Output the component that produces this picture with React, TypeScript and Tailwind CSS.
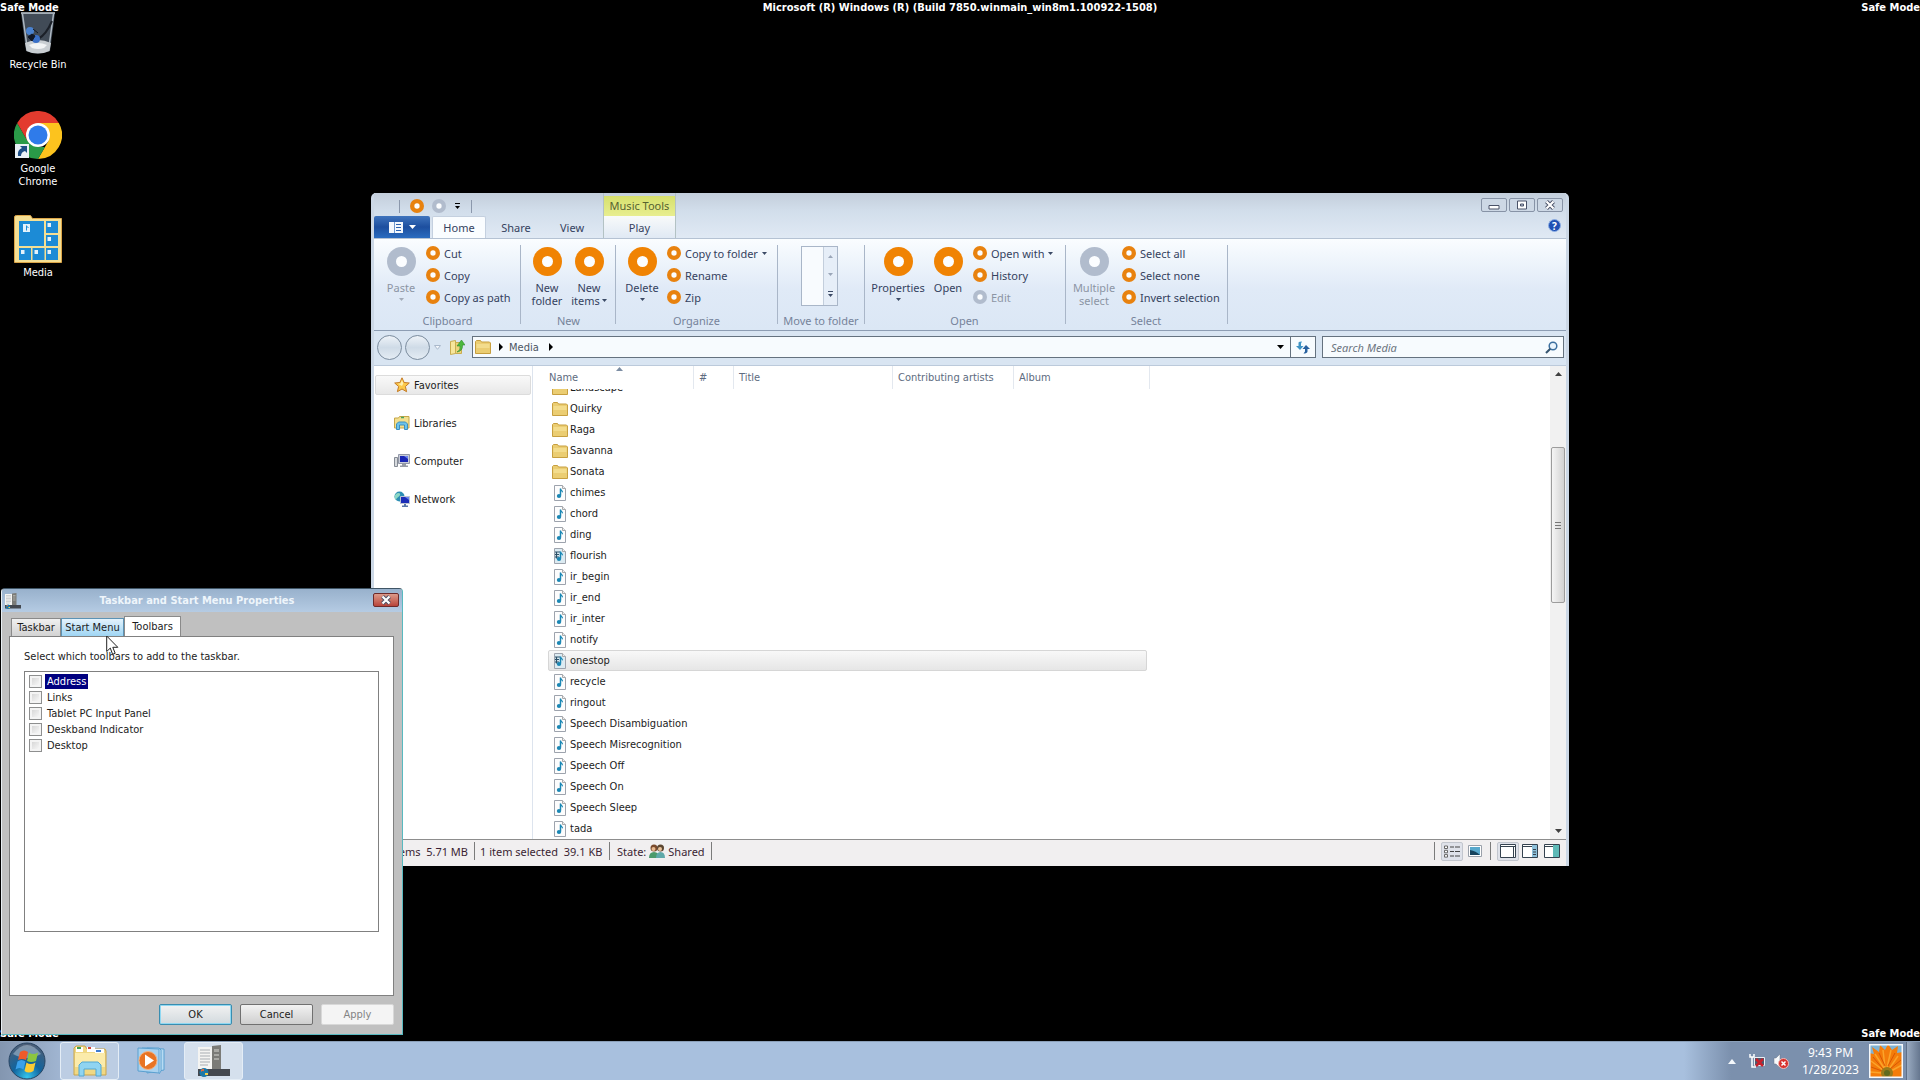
import type { ReactNode } from "react";

const files = [
  "Landscape",
  "Quirky",
  "Raga",
  "Savanna",
  "Sonata",
  "chimes",
  "chord",
  "ding",
  "flourish",
  "ir_begin",
  "ir_end",
  "ir_inter",
  "notify",
  "onestop",
  "recycle",
  "ringout",
  "Speech Disambiguation",
  "Speech Misrecognition",
  "Speech Off",
  "Speech On",
  "Speech Sleep",
  "tada",
];
const folders = ["Landscape", "Quirky", "Raga", "Savanna", "Sonata"];
const midi = ["flourish", "onestop"];
const toolbars = ["Address", "Links", "Tablet PC Input Panel", "Deskband Indicator", "Desktop"];

/* ---------- icons ---------- */

function Ring({ big, muted }: { big?: boolean; muted?: boolean }) {
  const size = big ? 29 : 14;
  return (
    <svg width={size} height={size} viewBox="0 0 29 29" className="shrink-0">
      <circle cx="14.5" cy="14.5" r="14.5" fill={muted ? "#b1bccd" : big ? "#f08303" : "#e8820f"} />
      <circle cx="14.5" cy="14.5" r="5.5" fill="#fbfdff" />
    </svg>
  );
}

function Caret({ className = "text-[#3b4a66]" }: { className?: string }) {
  return (
    <svg width="5" height="3" viewBox="0 0 5 3" className={`shrink-0 ${className}`}>
      <path d="M0 0h5L2.5 3z" fill="currentColor" />
    </svg>
  );
}

function FolderIcon() {
  return (
    <svg width="16" height="14" viewBox="0 0 16 14" className="shrink-0">
      <path d="M.5 13.500V1.500l1-1h4l1 1.500h8l1 1v10.500z" fill="#ebcd72" stroke="#c79f3f" />
      <path d="M1.500 4h13v4h-13z" fill="#f3dc8c" />
    </svg>
  );
}

function NoteIcon({ film }: { film?: boolean }) {
  return (
    <svg width="16" height="16" viewBox="0 0 16 16" className="shrink-0">
      <path d="M2.500.5h8l3 3v12h-11z" fill={film ? "#dcebf2" : "#fdfdfd"} stroke="#9da3ad" />
      <path d="M10.500.5v3h3" fill="#eee" stroke="#aaa" />
      {film && <path d="M3 4h5M3 6.500h4M3 9h4M4.500 3.500v7" stroke="#2c5068" strokeWidth="1.200" />}
      <path d="M8.500 3.500v7" stroke="#1b87b4" strokeWidth="1.500" />
      <path d="M8.500 3c.5 2 3 2 2.500 5-.5-1.500-1.500-1.500-2.500-2z" fill="#1b87b4" />
      <ellipse cx="7" cy="11" rx="2.200" ry="1.900" fill="#1b87b4" />
    </svg>
  );
}

function StarIcon() {
  return (
    <svg width="16" height="16" viewBox="0 0 16 16" className="shrink-0">
      <path d="M8 .8l2.100 4.700 5.200.5-3.900 3.500 1.200 5.200L8 12l-4.600 2.700 1.200-5.200L.7 6l5.200-.5z" fill="#fcc94a" stroke="#c47a24" />
      <path d="M8 3l1.300 3.500L8 9 4 6.800l2.500-.4z" fill="#fff0b0" />
    </svg>
  );
}

function LibrariesIcon() {
  return (
    <svg width="16" height="16" viewBox="0 0 16 16" className="shrink-0">
      <path d="M.5 13V3h4l1-1.500H15V13z" fill="#f2df8d" stroke="#c6a649" />
      <path d="M7 2.500h3" stroke="#47a35f" strokeWidth="1.500" />
      <path d="M2.500 14.500V9l2-2h7l2 2v5.500h-3V10h-5v4.500z" fill="#6cc3ea" stroke="#3d8fbd" />
    </svg>
  );
}

function ComputerIcon() {
  return (
    <svg width="16" height="16" viewBox="0 0 16 16" className="shrink-0">
      <path d="M.5 4.500h3v9h-3z" fill="#d6d9dd" stroke="#858b94" />
      <path d="M4.500 1.500h11v9h-11z" fill="#c8ccd8" stroke="#9298a8" />
      <path d="M6 3h8v6H6z" fill="#1926b4" />
      <path d="M10 3h4v3z" fill="#6d86ee" />
      <path d="M8 11h4v1.500h2V14H6v-1.500h2z" fill="#969ba5" />
    </svg>
  );
}

function NetworkIcon() {
  return (
    <svg width="16" height="16" viewBox="0 0 16 16" className="shrink-0">
      <circle cx="5.500" cy="5.500" r="5" fill="#2c8eb4" />
      <path d="M2 3c2-2 5-1 4 1S3 6 2 9C0 7 0 5 2 3z" fill="#8dd8c5" />
      <path d="M6.500 5.500h9v7h-9z" fill="#1c2cb8" stroke="#bcc3d2" />
      <path d="M11 6h4v3z" fill="#6a85ee" />
      <path d="M10 13h2v1.500h2V16H8v-1.500h2z" fill="#5a76a8" />
    </svg>
  );
}

function RecycleBinIcon() {
  return (
    <svg width="36" height="46" viewBox="0 0 36 46">
      <path d="M1 4h34l-5 38q-12 5-24 0z" fill="#4c5866" opacity=".85" />
      <path d="M2.500 5l5 36M33.500 5l-5 36" stroke="#aeb8c2" strokeWidth="1.500" />
      <path d="M5 34q13-6 26 0l-1.500 8q-12 5-23 0z" fill="#c9ced2" />
      <path d="M9 36q9-4 18 0l-3 3q-6 2-12 0z" fill="#f2f4f5" />
      <path d="M1 4h34" stroke="#c7d0d8" strokeWidth="1.500" />
      <path d="M18 30q8-4 14-18" stroke="#1b2028" strokeWidth="2" fill="none" />
      <circle cx="10" cy="22" r="4" fill="#4a82cf" />
      <circle cx="16" cy="30" r="4" fill="#3a70c8" />
      <path d="M8 28l4-3 3 2-3 5zM13 20l5 4" fill="#101828" stroke="#101828" />
    </svg>
  );
}

function ChromeIcon() {
  return (
    <svg width="48" height="48" viewBox="0 0 48 48">
      <path d="M24 12h20.800A24 24 0 0 1 24 48L34.400 30z" fill="#fcc31e" />
      <path d="M3.200 12L13.600 30 24 36h7L24 48A24 24 0 0 1 3.200 12z" fill="#2a9a48" />
      <path d="M3.200 12A24 24 0 0 1 44.800 12H24L13.600 30z" fill="#e33b2e" />
      <circle cx="24" cy="24" r="12" fill="#fff" />
      <circle cx="24" cy="24" r="9.500" fill="#2f7bea" />
      <path d="M1 33h14v14H1z" fill="#e9f0f6" />
      <path d="M4 45q-1-6 4-8l-2-2h7v7l-2-2q-4 1-4 5z" fill="#1d4e86" />
    </svg>
  );
}

function MediaFolderIcon() {
  return (
    <svg width="48" height="48" viewBox="0 0 48 48">
      <path d="M.5 47.500V2q0-1.500 2-1.500h14l2 3h29v44z" fill="#f4df94" stroke="#dba548" />
      <path d="M5 6h25v25H5zM32 6h12v12H32zM32 20h12v11H32zM5 33h12v12H5zM18.500 33h12v12h-12zM32 33h12v12H32z" fill="#1c8bd6" />
      <path d="M9 9h7v8H9zM33.500 8h3.500v4h-3.500zM33.500 22h3.500v4h-3.500zM7 35h3.500v4H7zM20.500 35H24v4h-3.500zM33.500 35h3.500v4h-3.500z" fill="#e4f2fb" />
      <path d="M12.500 10.500v5M12.500 11l2 2" stroke="#1c8bd6" />
    </svg>
  );
}

function TaskbarDialogIcon({ large }: { large?: boolean }) {
  return (
    <svg width={large ? 32 : 16} height={large ? 32 : 16} viewBox="0 0 32 32" className="shrink-0">
      <path d="M14 1l9-1v26h-9z" fill="#7b7b77" />
      <path d="M16 4h5v3h-5zM16 9h5v2h-5zM16 13h5v2h-5z" fill="#a9a9a4" />
      <path d="M0 2h14v22H0z" fill="#f4f4f2" />
      <path d="M2 5h10M2 8h10M2 11h10M2 14h10M2 17h10M2 20h8" stroke="#a8adb2" />
      <path d="M0 24h32v7H0z" fill="#44484f" />
      <circle cx="6" cy="27.500" r="4.500" fill="#1c78a8" />
      <path d="M3 27q2-2 3-.5V24q-2-.5-3 1z" fill="#ef6b35" />
      <path d="M7 28h3v2H7z" fill="#f5cf48" />
    </svg>
  );
}

function ExplorerIcon() {
  return (
    <svg width="34" height="32" viewBox="0 0 34 32">
      <path d="M1 30V3l2-2h9l2 3h18l1 2v24z" fill="#f0d884" stroke="#c9a54c" />
      <path d="M3 2h7v5H3zM14 2h8v5h-8zM22 4h9v4h-9z" fill="#fff" />
      <path d="M4 2h4v2H4z" fill="#3c9e4e" />
      <path d="M15 2h3v2h-3z" fill="#d4453b" />
      <path d="M23 5h5v2h-5z" fill="#3f7ccf" />
      <path d="M2 8h30v14H2z" fill="#fbebab" />
      <path d="M6 31V20l3-3h16l3 3v11h-5v-7H11v7z" fill="#8fd4f1" stroke="#52a8d3" />
    </svg>
  );
}

function MediaPlayerIcon() {
  return (
    <svg width="30" height="28" viewBox="0 0 30 28">
      <path d="M10 1l17 1v21l-17 3z" fill="#b7dbf3" stroke="#5ba0d0" />
      <path d="M5 1h17l2 2v21l-2 3" fill="#cbe4f6" stroke="#5ba0d0" />
      <path d="M1 1l21 1v24L1 24z" fill="#a9d2ef" stroke="#5ba0d0" />
      <circle cx="11" cy="13.500" r="9" fill="#e87424" stroke="#f6b07c" />
      <path d="M8 7.500l9 6-9 6z" fill="#fff" />
    </svg>
  );
}

function StartOrb() {
  return (
    <svg width="38" height="38" viewBox="0 0 38 38">
      <defs>
        <radialGradient id="orb" cx=".5" cy=".95" r=".9">
          <stop offset="0" stopColor="#35c6ee" />
          <stop offset=".45" stopColor="#11649e" />
          <stop offset="1" stopColor="#4c5f78" />
        </radialGradient>
      </defs>
      <circle cx="19" cy="19" r="18" fill="url(#orb)" stroke="#284563" />
      <path d="M5 12Q19-6 33 12q-14 8-28 0z" fill="#c8d8e4" opacity=".45" />
      <path d="M12 10q4-3 8 0l-2 8q-4-2-8 0z" fill="#ee5a2a" />
      <path d="M21 10.500q4 3 9 0l-2 8.500q-5 2-9 0z" fill="#8cc63f" />
      <path d="M9.500 19.500q4-3 8 0l-2 8q-4-3-8 0z" fill="#3aa0ea" />
      <path d="M18.500 20.500q4 3 9 0l-2 8.500q-5 3-9 0z" fill="#fccb33" />
    </svg>
  );
}

function FlowerPicture() {
  return (
    <svg width="34" height="34" viewBox="0 0 34 34">
      <path d="M0 0h34v34H0z" fill="#7fb3d4" />
      <path
        d="M0 9l5 1-2-7 7 5 1-7 5 5 3-6 4 6 6-4-1 7 6-1v26H0z"
        fill="#f47c0a"
      />
      <path d="M15 24L6 10M16 24L14 6M18 24L22 6M20 25L29 12M14 26L2 17M22 27L33 21M13 29L1 28" stroke="#fba42a" strokeWidth="1.500" />
      <path d="M16 22L10 9M19 22L26 9M14 25L4 13M21 25L32 16M13 27L2 23" stroke="#d95604" />
      <circle cx="18" cy="29" r="6" fill="#9a7a1a" />
      <circle cx="18" cy="29" r="3" fill="#5f6a1e" />
      <path d="M.75.75h32.500v32.500H.75z" fill="none" stroke="#f5f8fb" strokeWidth="1.500" />
    </svg>
  );
}

function CloseGlyph() {
  return (
    <svg width="12" height="10" viewBox="0 0 12 10">
      <path d="M2.500 1.500l7 7M9.500 1.500l-7 7" stroke="#4a5268" strokeWidth="4" />
      <path d="M2.500 1.500l7 7M9.500 1.500l-7 7" stroke="#fff" strokeWidth="2.200" />
    </svg>
  );
}

/* ---------- ribbon ---------- */

function BigButton({
  label,
  width,
  muted,
  caret,
}: {
  label: ReactNode;
  width: string;
  muted?: boolean;
  caret?: boolean;
}) {
  return (
    <button className={`flex flex-col items-center ${width} ${muted ? "text-[#8c95a4]" : "text-[#35425e]"}`}>
      <Ring big muted={muted} />
      <span className="mt-[5px] leading-[13px] whitespace-nowrap">{label}</span>
      {caret && (
        <span className="mt-[4px]">
          <Caret className={muted ? "text-[#a3abb8]" : "text-[#3b4a66]"} />
        </span>
      )}
    </button>
  );
}

function SmallButton({ label, muted, caret }: { label: string; muted?: boolean; caret?: boolean }) {
  return (
    <button
      className={`flex h-[22px] items-center gap-1 whitespace-nowrap ${muted ? "text-[#8c95a4]" : "text-[#35425e]"}`}
    >
      <Ring muted={muted} />
      {label}
      {caret && <Caret />}
    </button>
  );
}

function Group({ title, width, children }: { title: string; width: string; children: ReactNode }) {
  return (
    <section className={`flex h-[79px] shrink-0 flex-col justify-between border-r border-[#a9b6c8] ${width}`}>
      <div className="flex items-start">{children}</div>
      <h2 className="pr-[4px] text-center leading-[7px] text-[#76839a]">{title}</h2>
    </section>
  );
}

function Ribbon() {
  return (
    <div className="flex h-[93px] border-y border-t-[#b5c2d3] border-b-[#8d9db3] bg-linear-to-b from-[#fafdff] via-[#e0eaf7] via-55% to-[#dbe7f5] pt-[6px]">
      <Group title="Clipboard" width="w-[147px] pl-[5px]">
        <div className="pt-[2px]">
          <BigButton label="Paste" width="w-[44px]" muted caret />
        </div>
        <div className="-mt-[3px] ml-[3px]">
          <SmallButton label="Cut" />
          <SmallButton label="Copy" />
          <SmallButton label="Copy as path" />
        </div>
      </Group>
      <Group title="New" width="w-[95px] pl-[5px]">
        <div className="flex pt-[2px]">
          <BigButton label={<>New<br />folder</>} width="w-[42px]" />
          <BigButton
            label={<>New<br /><span className="flex items-center gap-[2px]">items <Caret /></span></>}
            width="w-[42px]"
          />
        </div>
      </Group>
      <Group title="Organize" width="w-[162px] pl-[4px]">
        <div className="pt-[2px]">
          <BigButton label="Delete" width="w-[44px]" caret />
        </div>
        <div className="-mt-[3px] ml-[3px]">
          <SmallButton label="Copy to folder" caret />
          <SmallButton label="Rename" />
          <SmallButton label="Zip" />
        </div>
      </Group>
      <Group title="Move to folder" width="w-[87px] pl-[4px]">
        <div className="mt-px ml-[19px] flex h-[60px] w-[37px] border border-[#a9b6c8] bg-[#f8fbfe]">
          <div className="flex-1" />
          <div className="flex w-[14px] flex-col items-center justify-around border-l border-[#c3cedc] bg-[#e6eef8]">
            <span className="rotate-180"><Caret className="text-[#9aa6b8]" /></span>
            <Caret className="text-[#9aa6b8]" />
            <span className="border-t border-[#3b4a66] pt-[2px]"><Caret /></span>
          </div>
        </div>
      </Group>
      <Group title="Open" width="w-[201px] pl-[3px]">
        <div className="flex pt-[2px]">
          <BigButton label="Properties" width="w-[60px]" caret />
          <BigButton label="Open" width="w-[40px]" />
        </div>
        <div className="-mt-[3px] ml-[5px]">
          <SmallButton label="Open with" caret />
          <SmallButton label="History" />
          <SmallButton label="Edit" muted />
        </div>
      </Group>
      <Group title="Select" width="w-[162px] pl-[3px]">
        <div className="pt-[2px]">
          <BigButton label={<>Multiple<br />select</>} width="w-[50px]" muted />
        </div>
        <div className="-mt-[3px] ml-[3px]">
          <SmallButton label="Select all" />
          <SmallButton label="Select none" />
          <SmallButton label="Invert selection" />
        </div>
      </Group>
    </div>
  );
}

/* ---------- explorer window ---------- */

function TitleButton({ label, children }: { label: string; children: ReactNode }) {
  return (
    <button
      aria-label={label}
      className="flex h-[14px] w-[26px] items-center justify-center rounded-[2px] border border-[#8793a6] bg-[#cdd8e5]"
    >
      {children}
    </button>
  );
}

function ExplorerHeader() {
  return (
    <header className="flex h-[45px] justify-between bg-linear-to-b from-[#c3cedb] via-[#d2deeb] via-40% to-[#e0e9f4]">
      <div className="flex">
        <div className="flex w-[229px] flex-col">
          <div className="flex h-[23px] items-center gap-[8px] pt-[3px] pl-[25px]">
            <span className="mr-[2px] h-[13px] w-px bg-[#8b98ac]" />
            <Ring />
            <Ring muted />
            <span className="ml-px border-t border-black pt-[2px]">
              <Caret className="text-black" />
            </span>
            <span className="ml-[3px] h-[13px] w-px bg-[#8b98ac]" />
          </div>
          <nav className="flex h-[22px] items-stretch text-[#35425e]">
            <button
              aria-label="File"
              className="flex w-[56px] items-center justify-center gap-[6px] rounded-t-[2px] bg-linear-to-b from-[#3f74bd] via-[#1d4f9f] to-[#2a6cc0]"
            >
              <svg width="14" height="11" viewBox="0 0 14 11">
                <path d="M0 0h14v11H0z" fill="#f4f8fd" />
                <path d="M5.500 0v11" stroke="#6f98cf" />
                <path d="M7 2.500h5M7 5.500h5M7 8.500h5" stroke="#2c62af" />
              </svg>
              <svg width="7" height="4" viewBox="0 0 7 4">
                <path d="M0 0h7L3.500 4z" fill="#fff" />
              </svg>
            </button>
            <button className="ml-[2px] w-[54px] rounded-t-[2px] border border-b-0 border-[#c4d0df] bg-[#fafdff]">Home</button>
            <button className="w-[60px]">Share</button>
            <button className="w-[52px]">View</button>
          </nav>
        </div>
        <div className="flex w-[73px] flex-col border-x border-[#b3c2c4] text-center text-[#35425e]">
          <div className="mt-[3px] h-[20px] bg-linear-to-b from-[#d6e06c] to-[#e8ee90] leading-[19px] text-[#56622f]">Music Tools</div>
          <button className="h-[22px] bg-linear-to-b from-[#f8fafa] to-[#e0e9f4]">Play</button>
        </div>
      </div>
      <div className="flex flex-col items-end pt-[5px] pr-[3px]">
        <div className="flex gap-[2px]">
          <TitleButton label="Minimize">
            <svg width="12" height="10" viewBox="0 0 12 10">
              <path d="M1 5.500h10v3.500H1z" fill="#fff" stroke="#4a5268" />
            </svg>
          </TitleButton>
          <TitleButton label="Restore">
            <svg width="12" height="10" viewBox="0 0 12 10">
              <path d="M1.500 1h9v8h-9z" fill="#fff" stroke="#4a5268" />
              <path d="M4.500 4h3v2h-3z" fill="#b9c5d5" stroke="#4a5268" />
            </svg>
          </TitleButton>
          <TitleButton label="Close">
            <CloseGlyph />
          </TitleButton>
        </div>
        <button
          aria-label="Help"
          className="mt-[7px] mr-[2px] flex size-[13px] items-center justify-center rounded-full border border-[#8fb0e4] bg-[#1f50b4] text-[10px] leading-none font-bold text-white"
        >
          ?
        </button>
      </div>
    </header>
  );
}

function AddressBar() {
  return (
    <div className="flex h-[34px] items-center bg-[#d9e5f2] pr-[2px] pb-[2px] font-['DejaVu_Sans_Condensed','Noto_Sans',sans-serif]">
      <div className="flex items-center gap-[3px] pl-[3px]">
        <button aria-label="Back" className="size-[25px] rounded-full border border-[#7b8c9e] bg-linear-to-b from-[#eef3f8] via-[#cfdbe7] to-[#e4ecf4]" />
        <button aria-label="Forward" className="size-[25px] rounded-full border border-[#7b8c9e] bg-linear-to-b from-[#eef3f8] via-[#cfdbe7] to-[#e4ecf4]" />
      </div>
      <button aria-label="Recent locations" className="ml-[4px]">
        <svg width="7" height="5" viewBox="0 0 7 5">
          <path d="M.5.5h6L3.500 4.300z" fill="#f2f6fb" stroke="#a9b8cb" />
        </svg>
      </button>
      <button aria-label="Up" className="ml-[8px]">
        <svg width="16" height="16" viewBox="0 0 16 16">
          <path d="M1.500 2.500l5-1v13l-5 1z" fill="#f7e69b" stroke="#c9ad50" />
          <path d="M6.500 3.500h6v11h-6z" fill="#edd47a" stroke="#c9ad50" />
          <path d="M8 13q4-2 3-6H8l4.500-6L16 6h-2.500q.5 6-5.500 7z" fill="#4bb83e" stroke="#2f8a2c" strokeWidth=".6" />
        </svg>
      </button>
      <div className="ml-[7px] flex h-[22px] flex-1 items-center border border-[#65727f] bg-[#f7fbfe] pl-[2px] text-[#4b5563]">
        <FolderIcon />
        <svg width="4" height="8" viewBox="0 0 4 8" className="ml-[8px]">
          <path d="M0 0l4 4-4 4z" fill="#000" />
        </svg>
        <a href="#media" className="ml-[6px]">Media</a>
        <svg width="4" height="8" viewBox="0 0 4 8" className="ml-[10px]">
          <path d="M0 0l4 4-4 4z" fill="#000" />
        </svg>
        <button aria-label="Previous locations" className="mr-[6px] ml-auto">
          <svg width="7" height="4" viewBox="0 0 7 4">
            <path d="M0 0h7L3.500 4z" fill="#000" />
          </svg>
        </button>
        <button aria-label="Refresh" className="flex h-full w-[25px] items-center justify-center border-l border-[#65727f]">
          <svg width="14" height="13" viewBox="0 0 14 13">
            <path d="M0 5h2.500V1.500Q3 .5 6 .5L5 2.500V5h2.500L4 9z" fill="#3e93c4" />
            <path d="M14 8h-2.500v2.500q-.5 2-4 2l1.500-2V8H6.500L10 4z" fill="#27609f" />
          </svg>
        </button>
      </div>
      <div className="ml-[6px] flex h-[22px] w-[242px] items-center border border-[#65727f] bg-[#f7fbfe] pr-[5px] pl-[8px]">
        <input
          aria-label="Search Media"
          placeholder="Search Media"
          className="w-full bg-transparent font-['Noto_Sans',sans-serif] italic outline-none placeholder:text-[#6b7480]"
        />
        <svg width="13" height="13" viewBox="0 0 13 13" className="shrink-0">
          <circle cx="8" cy="5" r="3.800" fill="#eaf4fc" stroke="#3c6f9f" strokeWidth="1.500" />
          <path d="M5.300 7.700L1 12" stroke="#35546f" strokeWidth="2" />
        </svg>
      </div>
    </div>
  );
}

function Sidebar() {
  const items = [
    { name: "Favorites", icon: <StarIcon /> },
    { name: "Libraries", icon: <LibrariesIcon /> },
    { name: "Computer", icon: <ComputerIcon /> },
    { name: "Network", icon: <NetworkIcon /> },
  ];
  return (
    <nav className="flex w-[159px] shrink-0 flex-col gap-[18px] border-r border-[#dde4ee] pt-[9px] pl-px">
      {items.map((item, i) => (
        <a
          key={item.name}
          href={`#${item.name}`}
          className={`mr-px flex h-[20px] items-center gap-1 rounded-[2px] border pl-[18px] ${
            i === 0 ? "border-[#dcdcdc] bg-linear-to-b from-[#f9f9f9] to-[#e8e8e8]" : "border-transparent"
          }`}
        >
          {item.icon}
          {item.name}
        </a>
      ))}
    </nav>
  );
}

function FileList() {
  const head = "h-[23px] border-r border-[#e3e8ef] pl-[5px] text-left font-normal leading-[24px]";
  return (
    <table className="flex min-w-0 flex-1 flex-col">
      <thead className="block text-[#5d6b80]">
        <tr className="flex">
          <th className={`${head} relative w-[161px] pl-[16px]`}>
            Name
            <svg width="7" height="4" viewBox="0 0 7 4" className="absolute top-px left-[83px]">
              <path d="M0 4h7L3.500 0z" fill="#7c8da3" />
            </svg>
          </th>
          <th className={`${head} w-[40px]`}>#</th>
          <th className={`${head} w-[159px]`}>Title</th>
          <th className={`${head} w-[121px]`}>Contributing artists</th>
          <th className={`${head} w-[136px]`}>Album</th>
        </tr>
      </thead>
      <tbody className="flex min-h-0 flex-1 flex-col justify-end overflow-hidden">
        {files.map((name) => (
          <tr
            key={name}
            className={`ml-[15px] flex h-[21px] w-[599px] shrink-0 rounded-[2px] border ${
              name === "onestop"
                ? "border-[#d6d6d6] bg-linear-to-b from-[#f8f8f8] to-[#e6e6e6]"
                : "border-transparent"
            }`}
          >
            <td className="flex items-center gap-[2px] pl-[3px]">
              {folders.includes(name) ? <FolderIcon /> : <NoteIcon film={midi.includes(name)} />}
              {name}
            </td>
          </tr>
        ))}
      </tbody>
    </table>
  );
}

function ScrollBar() {
  return (
    <div className="flex w-[16px] shrink-0 flex-col items-center bg-[#f1f1f1] py-[6px]">
      <svg width="7" height="4" viewBox="0 0 7 4">
        <path d="M0 4h7L3.500 0z" fill="#404040" />
      </svg>
      <div className="mt-[71px] flex h-[156px] w-[14px] flex-col items-center justify-center gap-[2px] rounded-[2px] border border-[#9c9c9c] bg-linear-to-r from-[#f5f5f5] to-[#d2d2d2]">
        <span className="h-px w-[6px] bg-[#777]" />
        <span className="h-px w-[6px] bg-[#777]" />
        <span className="h-px w-[6px] bg-[#777]" />
      </div>
      <svg width="7" height="4" viewBox="0 0 7 4" className="mt-auto">
        <path d="M0 0h7L3.500 4z" fill="#404040" />
      </svg>
    </div>
  );
}

function StatusBar() {
  const divider = <span className="h-[18px] w-px bg-[#7b7b7b]" />;
  return (
    <footer className="flex h-[27px] items-center justify-between border-t border-[#8d8d8d] bg-[#f1eff0] pb-[4px] text-[#3b1f33]">
      <div className="flex items-center">
        <span className="w-[100px] pr-[6px] text-right whitespace-pre">46 items  5.71 MB</span>
        {divider}
        <span className="w-[134px] pl-[5px] whitespace-pre">1 item selected  39.1 KB</span>
        {divider}
        <span className="ml-[7px]">State:</span>
        <svg width="16" height="14" viewBox="0 0 16 14" className="mx-[3px]">
          <circle cx="5" cy="4" r="3.500" fill="#7a4a2c" />
          <circle cx="4.500" cy="5" r="2" fill="#e8b98e" />
          <path d="M0 14q0-6 5-6t5 6z" fill="#4c9a6b" />
          <circle cx="11.500" cy="4" r="3.500" fill="#5c4630" />
          <circle cx="11" cy="5" r="2" fill="#eac39b" />
          <path d="M7 14q0-6 4.500-6t4.500 6z" fill="#5fa9a9" />
        </svg>
        <span className="mr-[6px]">Shared</span>
        {divider}
      </div>
      <div className="flex items-center pr-[6px]">
        {divider}
        <button aria-label="Details view" className="ml-[6px] flex h-[19px] w-[22px] items-center justify-center rounded-[2px] border border-[#c2c6ce] bg-[#dfe2ea]">
          <svg width="16" height="13" viewBox="0 0 16 13">
            <path d="M.5 1h3v2.500h-3zM.5 5.300h3v2.500h-3zM.5 9.600h3v2.500h-3z" fill="#fff" stroke="#666" />
            <path d="M6 2h4M11 2h5M6 6.500h4M11 6.500h5M6 11h4M11 11h5" stroke="#444" />
          </svg>
        </button>
        <button aria-label="Thumbnail view" className="mx-[5px]">
          <svg width="14" height="12" viewBox="0 0 14 12">
            <path d="M.5.5h13v11H.5z" fill="#fff" stroke="#9aa0aa" />
            <path d="M2 2h10v8H2z" fill="#58a8cc" />
            <path d="M2 10V5q6 1 10 5z" fill="#16425c" />
          </svg>
        </button>
        <span className="ml-[3px] h-[18px] w-px bg-[#7b7b7b]" />
        <button aria-label="No pane" className="ml-[6px] flex h-[19px] w-[22px] items-center justify-center rounded-[2px] border border-[#c2c6ce] bg-[#dfe2ea]">
          <svg width="16" height="14" viewBox="0 0 16 14">
            <path d="M.5.5h15v13H.5z" fill="#fff" stroke="#35424f" />
            <path d="M0 2.500h16M13.500 3v10" stroke="#35424f" />
          </svg>
        </button>
        <button aria-label="Preview pane" className="ml-[3px]">
          <svg width="16" height="14" viewBox="0 0 16 14">
            <path d="M.5.5h15v13H.5z" fill="#fff" stroke="#35424f" />
            <path d="M10 1h5v12h-5z" fill="#8ec0da" />
            <path d="M0 2.500h10M11 5.500h3M11 8h3M11 10.500h3" stroke="#35424f" />
          </svg>
        </button>
        <button aria-label="Details pane" className="ml-[6px]">
          <svg width="16" height="14" viewBox="0 0 16 14">
            <path d="M.5.5h15v13H.5z" fill="#fff" stroke="#35424f" />
            <path d="M9 1h6v12H9z" fill="#5fbab8" />
            <path d="M0 2.500h9" stroke="#35424f" />
          </svg>
        </button>
      </div>
    </footer>
  );
}

function ExplorerWindow() {
  return (
    <main className="absolute top-[193px] left-[371px] flex h-[673px] w-[1198px] flex-col rounded-t-[5px] border-x-[3px] border-[#ccd8e6] bg-white">
      <ExplorerHeader />
      <Ribbon />
      <AddressBar />
      <div className="flex min-h-0 flex-1 border-t border-[#bccadb] font-['DejaVu_Sans_Condensed','Noto_Sans',sans-serif]">
        <Sidebar />
        <FileList />
        <ScrollBar />
      </div>
      <StatusBar />
    </main>
  );
}

/* ---------- properties dialog ---------- */

function PropertiesDialog() {
  const button = "h-[21px] w-[73px] rounded-[2px] border";
  return (
    <section className="absolute top-[588px] left-px flex h-[447px] w-[402px] flex-col rounded-t-[4px] border border-t-[#3f5566] border-r-[#58b9c0] border-b-[#58b9c0] border-l-[#e8eef2] bg-[#c0c0c0] font-['DejaVu_Sans_Condensed','Noto_Sans',sans-serif]">
      <header className="flex h-[23px] items-center justify-between rounded-t-[3px] bg-linear-to-b from-[#98b1cc] to-[#b5cbe3] pr-[3px] pl-[3px]">
        <TaskbarDialogIcon />
        <h1 className="font-bold text-[#eef5fb]">Taskbar and Start Menu Properties</h1>
        <button aria-label="Close" className="-mt-[2px] flex h-[14px] w-[26px] items-center justify-center rounded-[2px] border border-[#6d2a2a] bg-linear-to-b from-[#dc9a8a] to-[#b8433a]">
          <CloseGlyph />
        </button>
      </header>
      <div className="flex flex-1 flex-col pt-[4px] pr-[8px] pb-[9px] pl-[7px]">
        <div role="tablist" className="flex items-end pl-[2px]">
          <button role="tab" className="h-[18px] w-[50px] border border-b-0 border-[#8a8a8a] bg-linear-to-b from-[#f0f0f0] to-[#d3d3d3]">
            Taskbar
          </button>
          <button role="tab" className="h-[18px] w-[63px] border border-b-0 border-[#5c93b5] bg-linear-to-b from-[#e4f3fc] to-[#9ed5f4]">
            Start Menu
          </button>
          <button role="tab" aria-selected="true" className="-mb-px h-[21px] w-[57px] border border-b-0 border-[#8a8a8a] bg-white pb-[2px]">
            Toolbars
          </button>
        </div>
        <div className="flex flex-1 flex-col border border-[#808080] bg-white px-[14px] pt-[10px]">
          <p className="leading-[20px]">Select which toolbars to add to the taskbar.</p>
          <ul className="mt-[4px] h-[261px] border border-[#808080] pt-px pl-[4px]">
            {toolbars.map((name, i) => (
              <li key={name}>
                <label className="flex h-[16px] items-center gap-[3px]">
                  <input
                    type="checkbox"
                    className="size-[13px] appearance-none border border-[#8e8f8f] bg-linear-to-br from-[#cfcfcf] to-white shadow-[inset_0_0_0_2px_#f4f4f4]"
                  />
                  <span className={`px-[2px] leading-[15px] ${i === 0 ? "bg-[#000080] text-white" : ""}`}>{name}</span>
                </label>
              </li>
            ))}
          </ul>
        </div>
        <div className="mt-[8px] flex justify-end gap-[8px]">
          <button className={`${button} border-[#3a8db0] bg-linear-to-b from-[#f2f2f2] to-[#d2dade] shadow-[inset_0_0_0_1px_#8fd8f2]`}>OK</button>
          <button className={`${button} border-[#707070] bg-linear-to-b from-[#f2f2f2] to-[#cfcfcf]`}>Cancel</button>
          <button disabled className={`${button} border-[#d8d8d8] bg-[#f4f4f4] text-[#838383]`}>
            Apply
          </button>
        </div>
      </div>
    </section>
  );
}

/* ---------- desktop ---------- */

function DesktopIcon({ label, children }: { label: ReactNode; children: ReactNode }) {
  return (
    <button className="flex h-[104px] w-[76px] flex-col items-center gap-[3px] leading-[13px] text-white">
      <span className="flex h-[48px] items-end">{children}</span>
      <span>{label}</span>
    </button>
  );
}

function Taskbar() {
  const task = "flex h-full w-[59px] items-center justify-center rounded-[3px] border border-[#e4edf6]";
  return (
    <footer className="flex h-[39px] shrink-0 justify-between border-t border-[#8a9fb8] bg-[#a8c0de] text-[#fff]">
      <div className="flex items-center">
        <button aria-label="Start" className="flex h-full w-[60px] items-center bg-linear-to-r from-[#8396b0] to-[#a0b5d1] pl-[8px]">
          <StartOrb />
        </button>
        <button aria-label="Windows Explorer" className={`${task} bg-[#bccde3]`}>
          <ExplorerIcon />
        </button>
        <button aria-label="Windows Media Player" className="flex w-[65px] justify-center">
          <MediaPlayerIcon />
        </button>
        <button aria-label="Taskbar and Start Menu Properties" className={`${task} bg-[#d5e0ed]`}>
          <TaskbarDialogIcon large />
        </button>
      </div>
      <div className="flex items-center bg-linear-to-r from-[#a8c0de] to-[#7b90ad] to-20% pl-[44px]">
        <button aria-label="Show hidden icons">
          <svg width="8" height="5" viewBox="0 0 8 5">
            <path d="M0 5h8L4 0z" fill="#f4f8fb" />
          </svg>
        </button>
        <svg width="16" height="16" viewBox="0 0 16 16" className="ml-[13px]">
          <path d="M5.500 4.500h10v8h-10z" fill="#4c5b6e" stroke="#e9eef3" />
          <path d="M1 1v3h4V1M3 4v10h4" stroke="#fff" fill="none" strokeWidth="1.500" />
          <path d="M7 6l7 7M14 6l-7 7" stroke="#c8202b" strokeWidth="2.500" />
        </svg>
        <svg width="16" height="16" viewBox="0 0 16 16" className="ml-[8px]">
          <path d="M1 5h2l4-4v14l-4-4H1z" fill="#f7f9fb" stroke="#6b7788" strokeWidth=".5" />
          <circle cx="10.500" cy="10.500" r="5" fill="#d7322e" stroke="#f3b9b5" />
          <path d="M8.500 8.500l4 4M12.500 8.500l-4 4" stroke="#fff" strokeWidth="1.500" />
        </svg>
        <time className="mr-[9px] ml-[12px] w-[59px] text-center text-[12px] leading-[17px]">
          9:43 PM
          <br />
          1/28/2023
        </time>
        <FlowerPicture />
        <button aria-label="Show desktop" className="ml-[3px] h-full w-[14px] border-l border-[#5f7088] bg-linear-to-r from-[#9aabc1] to-[#66778f]" />
      </div>
    </footer>
  );
}

export default function App() {
  return (
    <div className="relative flex h-screen flex-col overflow-hidden bg-black font-['Noto_Sans',sans-serif] text-[11px] leading-[15px] text-[#1c1c1c]">
      <div className="flex justify-between font-['DejaVu_Sans_Condensed','Noto_Sans',sans-serif] font-bold text-white">
        <span>Safe Mode</span>
        <span>Microsoft (R) Windows (R) (Build 7850.winmain_win8m1.100922-1508)</span>
        <span>Safe Mode</span>
      </div>
      <div className="-mt-[8px] flex flex-1 flex-col font-['DejaVu_Sans_Condensed','Noto_Sans',sans-serif]">
        <DesktopIcon label="Recycle Bin">
          <RecycleBinIcon />
        </DesktopIcon>
        <DesktopIcon label={<>Google<br />Chrome</>}>
          <ChromeIcon />
        </DesktopIcon>
        <DesktopIcon label="Media">
          <MediaFolderIcon />
        </DesktopIcon>
      </div>
      <div className="flex justify-between font-['DejaVu_Sans_Condensed','Noto_Sans',sans-serif] font-bold text-white">
        <span>Safe Mode</span>
        <span>Safe Mode</span>
      </div>
      <Taskbar />
      <ExplorerWindow />
      <PropertiesDialog />
      {/* mouse pointer */}
      <svg width="13" height="21" viewBox="0 0 13 21" className="absolute top-[635px] left-[106px]">
        <path d="M.7 1v15.500l3.600-3.400 2.300 6.200 2.600-1-2.400-6h5z" fill="#fff" stroke="#222" />
      </svg>
    </div>
  );
}
